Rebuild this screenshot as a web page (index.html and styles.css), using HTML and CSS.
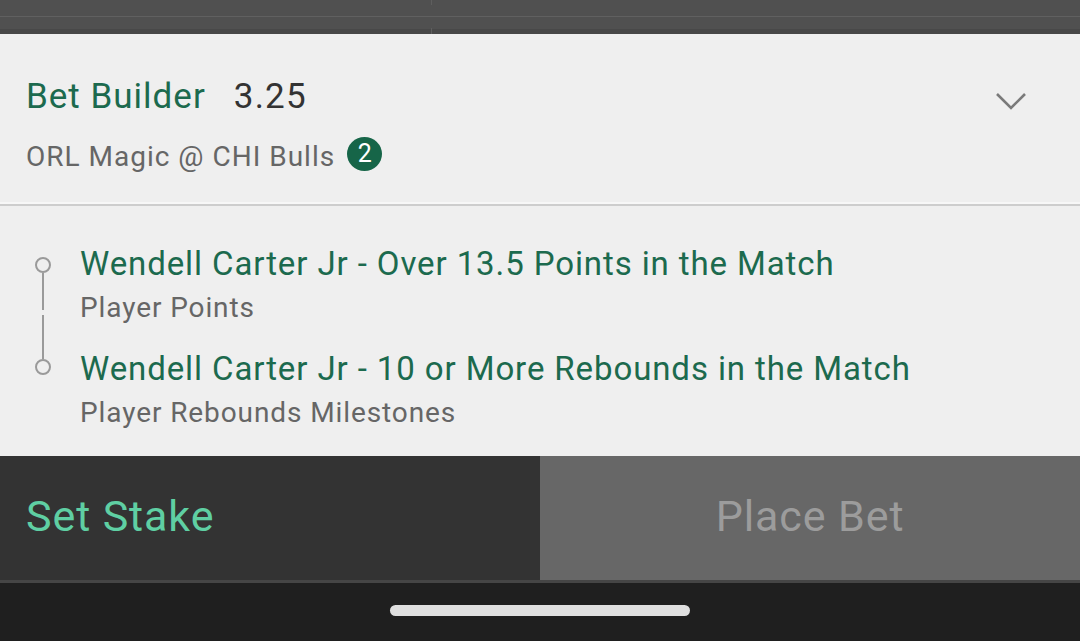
FILE: index.html
```html
<!DOCTYPE html>
<html lang="en">
<head>
    <meta charset="UTF-8">
    <meta name="viewport" content="width=device-width, initial-scale=1.0">
    <title>Bet Slip</title>
    <link rel="stylesheet" href="styles.css">
</head>
<body>
    <!-- Strip of the page behind the slip -->
    <div class="backdrop">
        <div class="backdrop-row top"><span class="tick"></span></div>
        <div class="backdrop-row bottom"><span class="tick"></span></div>
    </div>

    <div class="slip">
        <!-- Slip header -->
        <div class="slip-header">
            <div class="header-row">
                <span class="bet-name">Bet Builder</span>
                <span class="bet-odds">3.25</span>
                <svg class="chevron" width="32" height="20" viewBox="0 0 32 20">
                    <polyline points="2,3 16,17 30,3" fill="none" stroke="#7a7a7a" stroke-width="2.6"/>
                </svg>
            </div>
            <div class="match-row">
                <span class="match-name">ORL Magic @ CHI Bulls</span>
                <span class="badge">2</span>
            </div>
        </div>

        <!-- Selections -->
        <div class="legs">
            <div class="track">
                <span class="dot"></span>
                <span class="line first"></span>
                <span class="line second"></span>
                <span class="dot"></span>
            </div>
            <div class="leg-list">
                <div class="leg">
                    <div class="leg-title">Wendell Carter Jr - Over 13.5 Points in the Match</div>
                    <div class="leg-market">Player Points</div>
                </div>
                <div class="leg">
                    <div class="leg-title">Wendell Carter Jr - 10 or More Rebounds in the Match</div>
                    <div class="leg-market">Player Rebounds Milestones</div>
                </div>
            </div>
        </div>
    </div>

    <!-- Actions -->
    <div class="actions">
        <button class="action stake">Set Stake</button>
        <button class="action place">Place Bet</button>
    </div>

    <div class="navbar">
        <span class="home-pill"></span>
    </div>
</body>
</html>
```

FILE: styles.css
```css
body {
    margin: 0;
    padding: 0;
    width: 1080px;
    height: 641px;
    overflow: hidden;
    font-family: 'Roboto', 'Liberation Sans', sans-serif;
    background-color: #efefef;
}

/* Backdrop strip */
.backdrop {
    height: 34px;
    background-color: #505050;
}

.backdrop-row {
    position: relative;
}

.backdrop-row.top {
    height: 16px;
    border-bottom: 1px solid #606060;
}

.backdrop-row.bottom {
    height: 12px;
    border-bottom: 5px solid #484848;
}

.tick {
    position: absolute;
    left: 431px;
    width: 1px;
    background-color: #5e5e5e;
}

.backdrop-row.top .tick {
    top: 0;
    height: 5px;
}

.backdrop-row.bottom .tick {
    bottom: -5px;
    height: 6px;
}

/* Slip */
.slip {
    background-color: #efefef;
    height: 422px;
}

.slip-header {
    padding: 39px 26px 0 26px;
    height: 131px;
    border-bottom: 2px solid #cdcdcd;
    box-shadow: 0 -2px 0 #f7f7f7 inset;
}

.header-row {
    display: flex;
    align-items: center;
    height: 46px;
}

.bet-name {
    font-size: 35px;
    letter-spacing: 1px;
    color: #1c6a4e;
}

.bet-odds {
    font-size: 35px;
    letter-spacing: 1.2px;
    color: #333;
    margin-left: 28px;
}

.chevron {
    margin-left: auto;
    margin-right: 27px;
    margin-top: 10px;
}

.match-row {
    display: flex;
    align-items: center;
    height: 40px;
    margin-top: 17px;
}

.match-name {
    font-size: 28px;
    letter-spacing: 1px;
    color: #666;
}

.badge {
    width: 35px;
    height: 34px;
    border-radius: 50%;
    background-color: #166548;
    color: #fff;
    font-size: 25px;
    line-height: 34px;
    text-align: center;
    margin-left: 12px;
    margin-bottom: 5px;
}

/* Legs */
.legs {
    display: flex;
    padding: 36px 0 20px 35px;
}

.track {
    display: flex;
    flex-direction: column;
    align-items: center;
    width: 16px;
    padding-top: 15px;
    margin-right: 29px;
}

.dot {
    width: 12px;
    height: 12px;
    border: 2px solid #9a9a9a;
    border-radius: 50%;
}

.line {
    width: 2px;
    background-color: #9a9a9a;
}

.line.first {
    height: 37px;
}

.line.second {
    height: 44px;
    margin-top: 5px;
}

.leg-list {
    display: flex;
    flex-direction: column;
    gap: 17px;
}

.leg-title {
    font-size: 33px;
    letter-spacing: 0.9px;
    line-height: 44px;
    color: #1c6a4e;
}

.leg-market {
    font-size: 28px;
    letter-spacing: 0.9px;
    line-height: 44px;
    color: #666;
}

/* Action buttons */
.actions {
    display: grid;
    grid-template-columns: 1fr 1fr;
    height: 124px;
    border-bottom: 3px solid #454545;
}

.action {
    border: none;
    margin: 0;
    font-family: 'Roboto', 'Liberation Sans', sans-serif;
    font-size: 43px;
    letter-spacing: 0.9px;
    cursor: pointer;
}

.action.stake {
    background-color: #333;
    color: #5fcfa3;
    text-align: left;
    padding: 0 0 4px 26px;
}

.action.place {
    background-color: #676767;
    color: #9c9c9c;
    padding: 0 0 4px 0;
}

/* System navigation */
.navbar {
    height: 58px;
    background-color: #1f1f1f;
    display: flex;
    justify-content: center;
    padding-top: 22px;
    box-sizing: border-box;
}

.home-pill {
    width: 300px;
    height: 11px;
    border-radius: 6px;
    background-color: #dfdfdf;
}
```
